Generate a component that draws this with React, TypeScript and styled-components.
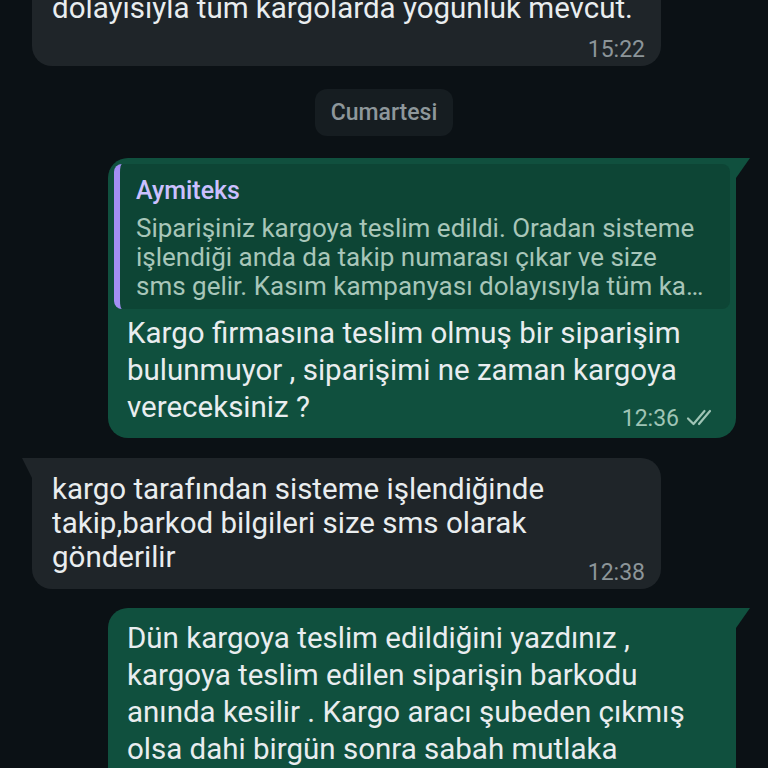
import styled, { createGlobalStyle } from "styled-components";

const GlobalStyle = createGlobalStyle`
  html, body {
    margin: 0;
    padding: 0;
    background: #0b1115;
    overflow: hidden;
  }
  body {
    font-family: Roboto, "Noto Sans", "Liberation Sans", sans-serif;
    -webkit-font-smoothing: antialiased;
  }
`;

const Chat = styled.div`
  width: 768px;
  height: 768px;
  overflow: hidden;
  display: flex;
  flex-direction: column;
  padding: 0 32px;
  box-sizing: border-box;
`;

const Row = styled.div<{ $out?: boolean; $gap?: number }>`
  display: flex;
  justify-content: ${(p) => (p.$out ? "flex-end" : "flex-start")};
  margin-top: ${(p) => p.$gap ?? 20}px;
`;

const Bubble = styled.div<{ $out?: boolean; $tail?: boolean }>`
  position: relative;
  width: ${(p) => (p.$out ? 628 : 629)}px;
  box-sizing: border-box;
  background: ${(p) => (p.$out ? "#10503e" : "#1f2529")};
  border-radius: ${(p) =>
    p.$tail === false
      ? "20px"
      : p.$out
      ? "20px 0 20px 20px"
      : "0 20px 20px 20px"};
  padding: ${(p) => (p.$out ? "6px 6px 8px 6px" : "14px 14px 5px 20px")};
  color: #e9edef;

  &::before {
    content: "";
    display: ${(p) => (p.$tail === false ? "none" : "block")};
    position: absolute;
    top: 0;
    ${(p) => (p.$out ? "right: -14px;" : "left: -10px;")}
    width: 0;
    height: 0;
    border-top: 20px solid ${(p) => (p.$out ? "#10503e" : "#1f2529")};
    ${(p) =>
      p.$out
        ? "border-right: 14px solid transparent;"
        : "border-left: 10px solid transparent;"}
  }
`;

const Quote = styled.div`
  background: #0d4535;
  border-left: 6px solid #a48ff5;
  border-radius: 8px;
  padding: 12px 14px 8px 16px;
`;

const QuoteAuthor = styled.div`
  font-size: 25px;
  line-height: 30px;
  font-weight: 500;
  color: #cbc0ff;
`;

const QuoteText = styled.div`
  margin-top: 8px;
  font-size: 26px;
  line-height: 29px;
  color: #a8c6b9;
`;

const Line = styled.span`
  display: block;
  white-space: nowrap;
  overflow: hidden;
  text-overflow: ellipsis;
`;

const MessageText = styled.div<{ $out?: boolean }>`
  font-size: 29.5px;
  line-height: ${(p) => (p.$out ? 37 : 34)}px;
  padding: ${(p) => (p.$out ? "6px 13px 0" : "0")};
`;

const Meta = styled.div<{ $out?: boolean; $shift: number }>`
  display: flex;
  justify-content: flex-end;
  align-items: center;
  gap: 7px;
  margin-top: ${(p) => p.$shift}px;
  padding-right: ${(p) => (p.$out ? 12 : 2)}px;
  height: 24px;
  font-size: 23px;
  color: ${(p) => (p.$out ? "#9fc4b5" : "#8c9599")};
`;

const DateRow = styled.div`
  display: flex;
  justify-content: center;
  margin-top: 23px;
`;

const DateChip = styled.div`
  background: #161d21;
  color: #8e979b;
  font-size: 23px;
  font-weight: 500;
  height: 47px;
  line-height: 47px;
  padding: 0 16px;
  border-radius: 12px;
`;

const DoubleTick = () => (
  <svg width="32" height="20" viewBox="0 0 32 20" fill="none">
    <path
      d="M2 10.5 L7.5 16 L18.5 3"
      stroke="currentColor"
      strokeWidth="2.2"
      strokeLinecap="round"
      strokeLinejoin="round"
    />
    <path
      d="M13 16 L24 3"
      stroke="currentColor"
      strokeWidth="2.2"
      strokeLinecap="round"
    />
  </svg>
);

const lines = (text: string[]) => text.map((t) => <Line key={t}>{t}</Line>);

export default function App() {
  return (
    <>
      <GlobalStyle />
      <Chat>
        <Row $gap={-23}>
          <Bubble $tail={false}>
            <MessageText>
              {lines(["dolayısıyla tüm kargolarda yoğunluk mevcut."])}
            </MessageText>
            <Meta $shift={12}>15:22</Meta>
          </Bubble>
        </Row>

        <DateRow>
          <DateChip>Cumartesi</DateChip>
        </DateRow>

        <Row $out $gap={22}>
          <Bubble $out>
            <Quote>
              <QuoteAuthor>Aymiteks</QuoteAuthor>
              <QuoteText>
                {lines([
                  "Siparişiniz kargoya teslim edildi. Oradan sisteme",
                  "işlendiği anda da takip numarası çıkar ve size",
                  "sms gelir. Kasım kampanyası dolayısıyla tüm ka…",
                ])}
              </QuoteText>
            </Quote>
            <MessageText $out>
              {lines([
                "Kargo firmasına teslim olmuş bir siparişim",
                "bulunmuyor , siparişimi ne zaman kargoya",
                "vereceksiniz ?",
              ])}
            </MessageText>
            <Meta $out $shift={-20}>
              12:36
              <DoubleTick />
            </Meta>
          </Bubble>
        </Row>

        <Row $gap={20}>
          <Bubble>
            <MessageText>
              {lines([
                "kargo tarafından sisteme işlendiğinde",
                "takip,barkod bilgileri size sms olarak",
                "gönderilir",
              ])}
            </MessageText>
            <Meta $shift={-14}>12:38</Meta>
          </Bubble>
        </Row>

        <Row $out $gap={19}>
          <Bubble $out>
            <MessageText $out>
              {lines([
                "Dün kargoya teslim edildiğini yazdınız ,",
                "kargoya teslim edilen siparişin barkodu",
                "anında kesilir . Kargo aracı şubeden çıkmış",
                "olsa dahi birgün sonra sabah mutlaka",
                "sisteme düşer ve takip bilgisi iletilir .",
              ])}
            </MessageText>
          </Bubble>
        </Row>
      </Chat>
    </>
  );
}
